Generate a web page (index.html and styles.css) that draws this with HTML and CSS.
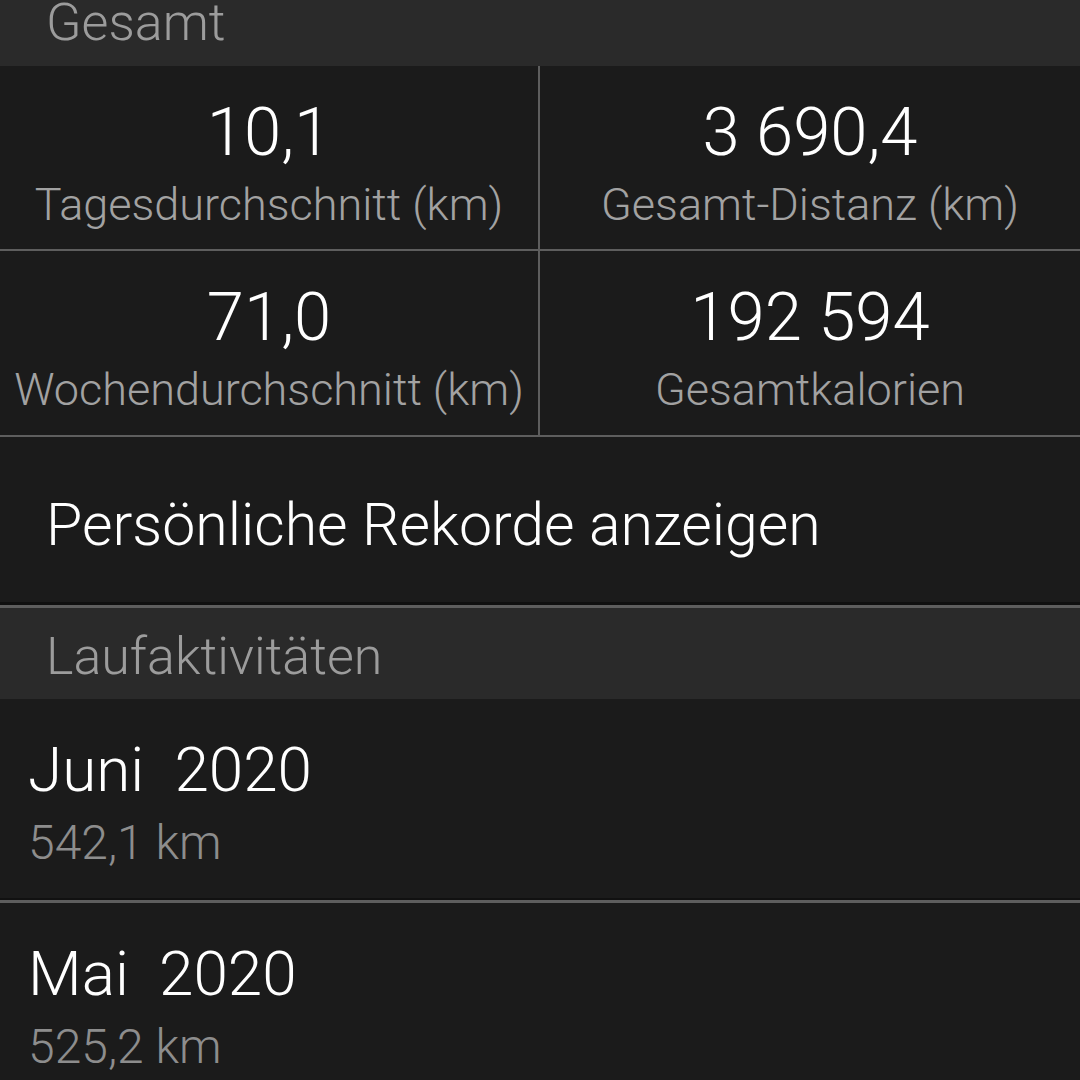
FILE: index.html
```html
<!DOCTYPE html>
<html lang="de">
<head>
<meta charset="utf-8">
<link rel="stylesheet" href="styles.css">
</head>
<body>
<div class="screen">
  <div class="section-header top"><span class="section-title">Gesamt</span></div>
  <div class="stats">
    <div class="stat">
      <div class="stat-value">10,1</div>
      <div class="stat-label">Tagesdurchschnitt (km)</div>
    </div>
    <div class="stat">
      <div class="stat-value">3 690,4</div>
      <div class="stat-label">Gesamt-Distanz (km)</div>
    </div>
    <div class="stat">
      <div class="stat-value">71,0</div>
      <div class="stat-label">Wochendurchschnitt (km)</div>
    </div>
    <div class="stat">
      <div class="stat-value">192 594</div>
      <div class="stat-label">Gesamtkalorien</div>
    </div>
  </div>
  <div class="link-row">Persönliche Rekorde anzeigen</div>
  <div class="section-header"><span class="section-title">Laufaktivitäten</span></div>
  <div class="month">
    <div class="month-name">Juni&nbsp; 2020</div>
    <div class="month-dist">542,1 km</div>
  </div>
  <div class="month">
    <div class="month-name">Mai&nbsp; 2020</div>
    <div class="month-dist">525,2 km</div>
  </div>
</div>
</body>
</html>
```

FILE: styles.css
```css
html, body {
  margin: 0;
  padding: 0;
  background: #1b1b1b;
}
.screen {
  width: 1080px;
  height: 1080px;
  overflow: hidden;
  font-family: Roboto, "Noto Sans", sans-serif;
  color: #ffffff;
}
.section-header {
  background: #2a2a2a;
  height: 91px;
  padding-left: 46px;
  box-sizing: border-box;
  display: flex;
  align-items: flex-start;
}
.section-header.top {
  height: 66px;
}
.section-title {
  font-weight: 300;
  font-size: 52px;
  line-height: 52px;
  color: #9c9c9c;
  margin-top: 23px;
}
.section-header.top .section-title {
  margin-top: -3px;
}
.stats {
  display: grid;
  grid-template-columns: 540px 1fr;
  border-bottom: 2px solid #5e5e5e;
}
.stat {
  height: 184px;
  display: flex;
  flex-direction: column;
  align-items: center;
  box-sizing: border-box;
  padding-top: 33px;
}
.stat:nth-child(odd) {
  border-right: 2px solid #5e5e5e;
}
.stat:nth-child(-n+2) {
  border-bottom: 2px solid #5e5e5e;
  height: 185px;
}
.stat-value {
  font-weight: 300;
  font-size: 67px;
  line-height: 67px;
  color: #ffffff;
}
.stat-label {
  font-weight: 300;
  font-size: 45px;
  line-height: 45px;
  color: #a2a2a2;
  margin-top: 16px;
  white-space: nowrap;
}
.link-row {
  height: 171px;
  box-sizing: border-box;
  padding-left: 46px;
  padding-top: 58px;
  font-weight: 300;
  font-size: 59px;
  line-height: 59px;
  color: #ffffff;
  border-bottom: 3px solid #5e5e5e;
  box-shadow: inset 0 -3px 0 #101010;
}
.month {
  height: 204px;
  box-sizing: border-box;
  padding-left: 28px;
  padding-top: 40px;
  border-bottom: 3px solid #5e5e5e;
  box-shadow: inset 0 -2px 0 #111111;
}
.month-name {
  font-weight: 300;
  font-size: 62px;
  line-height: 62px;
  color: #ffffff;
}
.month-dist {
  font-weight: 300;
  font-size: 48px;
  line-height: 48px;
  color: #8d8d8d;
  margin-top: 18px;
}
```
